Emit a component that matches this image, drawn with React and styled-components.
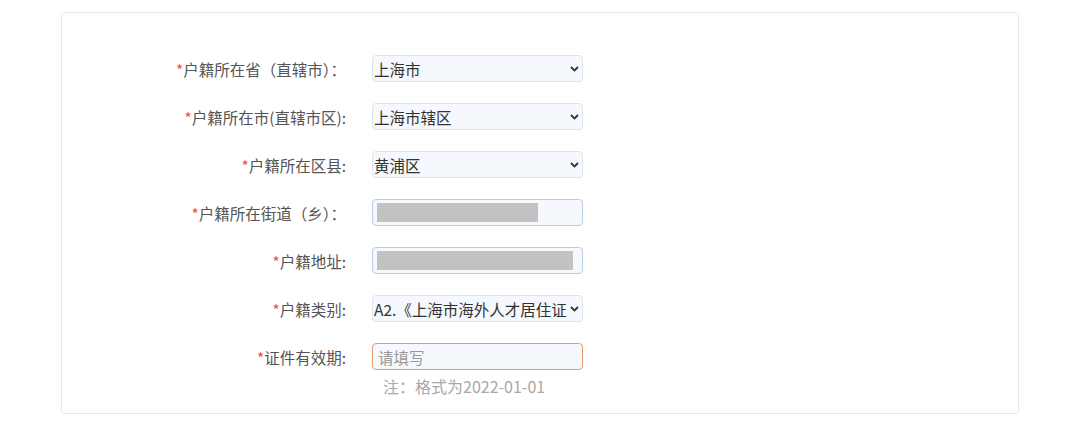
import { Fragment } from "react";
import styled, { createGlobalStyle } from "styled-components";

const GlobalStyle = createGlobalStyle`
  body {
    margin: 0;
    background: #fff;
    font-family: "Microsoft YaHei", "Noto Sans CJK SC", "Noto Sans", sans-serif;
  }
`;

const Page = styled.div`
  padding: 12px 61px 15px 61px;
`;

const Card = styled.div`
  border: 1px solid #e3e8ee;
  border-radius: 4px;
  padding: 42px 0 22px 0;
  height: 402px;
  box-sizing: border-box;
`;

const Form = styled.div`
  display: grid;
  grid-template-columns: 284px 211px;
  column-gap: 26px;
  row-gap: 21px;
`;

const Label = styled.label`
  justify-self: end;
  align-self: center;
  font-size: 15.5px;
  color: #555;
  white-space: nowrap;
`;

const Star = styled.span`
  color: #e5534b;
`;

const Field = styled.div`
  height: 27px;
  box-sizing: border-box;
  border: 1px solid ${(p) => p.$border || "#dbe4ee"};
  border-radius: 4px;
  background: #f5f8fc;
  display: flex;
  align-items: center;
  gap: 3px;
  padding: 0 ${(p) => p.$pad || 4}px;
  font-size: 15.5px;
  color: ${(p) => (p.$placeholder ? "#999" : "#333")};
  white-space: nowrap;
  overflow: hidden;
`;

const Value = styled.span`
  flex: 1;
  min-width: 0;
  overflow: hidden;
`;

const Chevron = styled.svg`
  flex: none;
  width: 9px;
  height: 6px;
  margin-right: 2px;
`;

const Redacted = styled.div`
  height: 19px;
  width: ${(p) => p.$w}px;
  background: #c2c2c2;
`;

const Note = styled.div`
  grid-column: 2;
  margin-top: -17px;
  padding-left: 11px;
  font-size: 16px;
  color: #a8a8a8;
`;

function Select({ value }) {
  return (
    <Field $pad={1}>
      <Value>{value}</Value>
      <Chevron viewBox="0 0 9 6">
        <path d="M1 1l3.5 3.5L8 1" fill="none" stroke="#333" strokeWidth="1.8" />
      </Chevron>
    </Field>
  );
}

const rows = [
  { label: "户籍所在省（直辖市）：", select: "上海市" },
  { label: "户籍所在市(直辖市区):", select: "上海市辖区" },
  { label: "户籍所在区县:", select: "黄浦区" },
  { label: "户籍所在街道（乡）：", redact: 161 },
  { label: "户籍地址:", redact: 196 },
  { label: "户籍类别:", select: "A2.《上海市海外人才居住证" },
];

export default function App() {
  return (
    <Page>
      <GlobalStyle />
      <Card>
        <Form>
          {rows.map((r) => (
            <Fragment key={r.label}>
              <Label>
                <Star>*</Star>
                {r.label}
              </Label>
              {r.select ? (
                <Select value={r.select} />
              ) : (
                <Field $border="#b9cfe8">
                  <Redacted $w={r.redact} />
                </Field>
              )}
            </Fragment>
          ))}
          <Label>
            <Star>*</Star>证件有效期:
          </Label>
          <Field $border="#e69a70" $pad={5} $placeholder>
            请填写
          </Field>
          <Note>注：格式为2022-01-01</Note>
        </Form>
      </Card>
    </Page>
  );
}
